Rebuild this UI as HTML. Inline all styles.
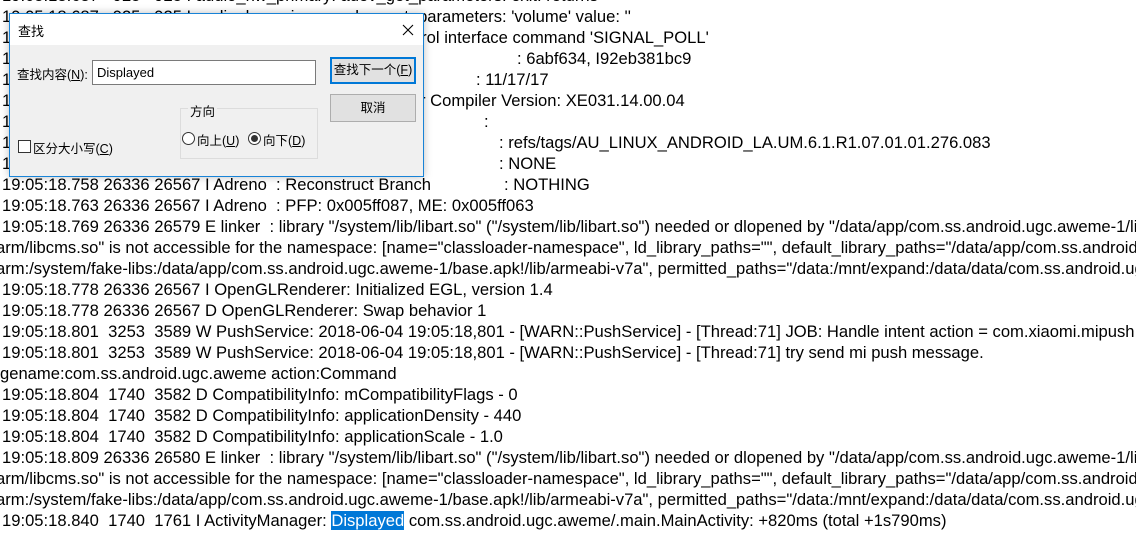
<!DOCTYPE html>
<html><head><meta charset="utf-8"><style>
body{margin:0;width:1136px;height:537px;overflow:hidden;background:#fff;position:relative;font-family:"Liberation Sans","Noto Sans CJK SC",sans-serif;}
.l{position:absolute;white-space:pre;font-size:16.6px;line-height:21px;height:21px;color:#000;}
.hl{background:#0078d7;color:#fff;}
.dlg{position:absolute;left:9px;top:13px;width:413px;height:162px;border:1px solid #1883d7;background:#f0f0f0;box-shadow:0 0 8px rgba(0,0,0,.25);font-size:12px;font-family:"Liberation Sans","Noto Sans CJK SC",sans-serif;}
.dlg .t{position:absolute;left:0;top:0;width:413px;height:31px;background:#fff;}
.a{position:absolute;white-space:pre;}
.btn{position:absolute;background:#e1e1e1;border:1px solid #adadad;text-align:center;box-sizing:border-box;}
</style></head><body>
<div class="l" style="left:2px;top:-15px">19:05:18.687   925   925 I audio_hw_primary: adev_get_parameters: exit: returns</div>
<div class="l" style="left:2px;top:6px">19:05:18.687   925   925 I audio_hw_primary: adev_get_parameters: 'volume' value: ''</div>
<div class="l" style="left:2px;top:27px">19:05:18.690  1190  1190 D wpa_supplicant: wlan0: Control interface command 'SIGNAL_POLL'</div>
<div class="l" style="left:2px;top:48px">1</div><div class="l" style="left:517px;top:48px">: 6abf634, I92eb381bc9</div>
<div class="l" style="left:2px;top:69px">1</div><div class="l" style="left:476px;top:69px">: 11/17/17</div>
<div class="l" style="left:2px;top:90px">1</div><div class="l" style="left:420px;top:90px">r Compiler Version: XE031.14.00.04</div>
<div class="l" style="left:2px;top:111px">1</div><div class="l" style="left:484px;top:111px">:</div>
<div class="l" style="left:2px;top:132px">1</div><div class="l" style="left:499px;top:132px">: refs/tags/AU_LINUX_ANDROID_LA.UM.6.1.R1.07.01.01.276.083</div>
<div class="l" style="left:2px;top:153px">1</div><div class="l" style="left:499px;top:153px">: NONE</div>
<div class="l" style="left:2px;top:174px">19:05:18.758 26336 26567 I Adreno  : Reconstruct Branch</div><div class="l" style="left:504px;top:174px">: NOTHING</div>
<div class="l" style="left:2px;top:195px">19:05:18.763 26336 26567 I Adreno  : PFP: 0x005ff087, ME: 0x005ff063</div>
<div class="l" style="left:2px;top:216px">19:05:18.769 26336 26579 E linker  : library "/system/lib/libart.so" ("/system/lib/libart.so") needed or dlopened by "/data/app/com.ss.android.ugc.aweme-1/lib/</div>
<div class="l" style="left:-4px;top:237px">arm/libcms.so" is not accessible for the namespace: [name="classloader-namespace", ld_library_paths="", default_library_paths="/data/app/com.ss.android.ugc.aweme-1/lib/</div>
<div class="l" style="left:-4px;top:258px">arm:/system/fake-libs:/data/app/com.ss.android.ugc.aweme-1/base.apk!/lib/armeabi-v7a", permitted_paths="/data:/mnt/expand:/data/data/com.ss.android.ugc.aweme"]</div>
<div class="l" style="left:2px;top:279px">19:05:18.778 26336 26567 I OpenGLRenderer: Initialized EGL, version 1.4</div>
<div class="l" style="left:2px;top:300px">19:05:18.778 26336 26567 D OpenGLRenderer: Swap behavior 1</div>
<div class="l" style="left:2px;top:321px">19:05:18.801  3253  3589 W PushService: 2018-06-04 19:05:18,801 - [WARN::PushService] - [Thread:71] JOB: Handle intent action = com.xiaomi.mipush.sdk</div>
<div class="l" style="left:2px;top:342px">19:05:18.801  3253  3589 W PushService: 2018-06-04 19:05:18,801 - [WARN::PushService] - [Thread:71] try send mi push message.</div>
<div class="l" style="left:0px;top:363px">gename:com.ss.android.ugc.aweme action:Command</div>
<div class="l" style="left:2px;top:384px">19:05:18.804  1740  3582 D CompatibilityInfo: mCompatibilityFlags - 0</div>
<div class="l" style="left:2px;top:405px">19:05:18.804  1740  3582 D CompatibilityInfo: applicationDensity - 440</div>
<div class="l" style="left:2px;top:426px">19:05:18.804  1740  3582 D CompatibilityInfo: applicationScale - 1.0</div>
<div class="l" style="left:2px;top:447px">19:05:18.809 26336 26580 E linker  : library "/system/lib/libart.so" ("/system/lib/libart.so") needed or dlopened by "/data/app/com.ss.android.ugc.aweme-1/lib/</div>
<div class="l" style="left:-4px;top:468px">arm/libcms.so" is not accessible for the namespace: [name="classloader-namespace", ld_library_paths="", default_library_paths="/data/app/com.ss.android.ugc.aweme-1/lib/</div>
<div class="l" style="left:-4px;top:489px">arm:/system/fake-libs:/data/app/com.ss.android.ugc.aweme-1/base.apk!/lib/armeabi-v7a", permitted_paths="/data:/mnt/expand:/data/data/com.ss.android.ugc.aweme"]</div>
<div class="l" style="left:2px;top:510px">19:05:18.840  1740  1761 I ActivityManager: <span class="hl">Displayed</span> com.ss.android.ugc.aweme/.main.MainActivity: +820ms (total +1s790ms)</div>

<div class="dlg">
 <div class="t"></div>
 <div class="a" style="left:8px;top:7px;font-size:13px">查找</div>
 <svg class="a" style="left:392px;top:10px" width="12" height="12"><path d="M1 1L11 11M11 1L1 11" stroke="#000" stroke-width="1.1"/></svg>
 <div class="a" style="left:7px;top:50px;font-size:12.5px">查找内容(<u>N</u>):</div>
 <div class="a" style="left:82px;top:46px;background:#fff;border:1px solid #7a7a7a;font-size:13px;line-height:23px;padding-left:4px;box-sizing:border-box;width:224px;height:25px">Displayed</div>
 <div class="btn" style="left:320px;top:43px;width:86px;height:27px;border:2px solid #0078d7;line-height:23px;font-size:12.5px">查找下一个(<u>F</u>)</div>
 <div class="btn" style="left:320px;top:80px;width:86px;height:28px;line-height:26px;font-size:12.5px">取消</div>
 <div class="a" style="left:170px;top:94px;width:136px;height:49px;border:1px solid #dcdcdc"></div>
 <div class="a" style="left:178px;top:87px;background:#f0f0f0;padding:0 2px;font-size:12.5px">方向</div>
 <div class="a" style="left:172px;top:118px;width:11px;height:11px;border:1px solid #333;border-radius:50%;background:#fff"></div>
 <div class="a" style="left:187px;top:116px;font-size:12.5px">向上(<u>U</u>)</div>
 <div class="a" style="left:238px;top:118px;width:11px;height:11px;border:1px solid #333;border-radius:50%;background:#fff"></div>
 <div class="a" style="left:241px;top:121px;width:7px;height:7px;border-radius:50%;background:#333"></div>
 <div class="a" style="left:253px;top:116px;font-size:12.5px">向下(<u>D</u>)</div>
 <div class="a" style="left:8px;top:126px;width:11px;height:11px;border:1px solid #333;background:#fff"></div>
 <div class="a" style="left:23px;top:124px;font-size:12.5px">区分大小写(<u>C</u>)</div>
</div>
</body></html>
